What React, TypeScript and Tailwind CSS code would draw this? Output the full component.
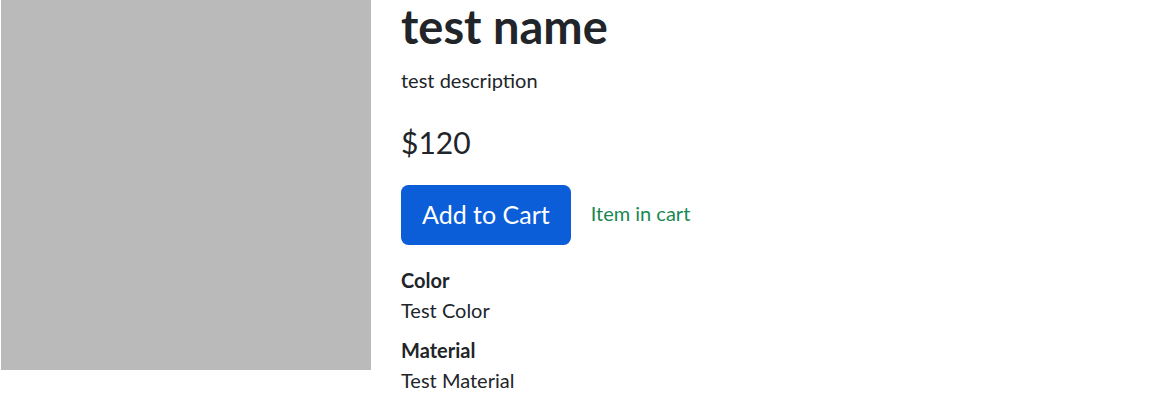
export default function App() {
  return (
    <div className="flex items-start bg-white text-[#212529] font-['Lato',sans-serif]" style={{ minHeight: 415 }}>
      {/* product image placeholder */}
      <div className="ml-px w-[370px] h-[370px] shrink-0 bg-[#bababa]" />

      <div className="ml-[30px] flex flex-col">
        <h1 className="text-[47px] leading-[52px] font-bold mb-[13px]">test name</h1>
        <p className="text-[20px] leading-[30px] mb-[25px]">test description</p>
        <p className="text-[30px] leading-[45px] mb-[20px]">$120</p>

        <div className="flex items-center">
          <button className="h-[60px] px-[21px] rounded-[7.5px] bg-[#0b5ed7] text-white text-[25px] leading-[37.5px]">
            Add to Cart
          </button>
          <span className="ml-[20px] text-[20px] leading-[30px] text-[#198754] -mt-[4px]">Item in cart</span>
        </div>

        <div className="mt-[20px] text-[20px] leading-[30px]">
          <div className="mb-[10px]">
            <div className="font-bold">Color</div>
            <div>Test Color</div>
          </div>
          <div>
            <div className="font-bold">Material</div>
            <div>Test Material</div>
          </div>
        </div>
      </div>
    </div>
  )
}
